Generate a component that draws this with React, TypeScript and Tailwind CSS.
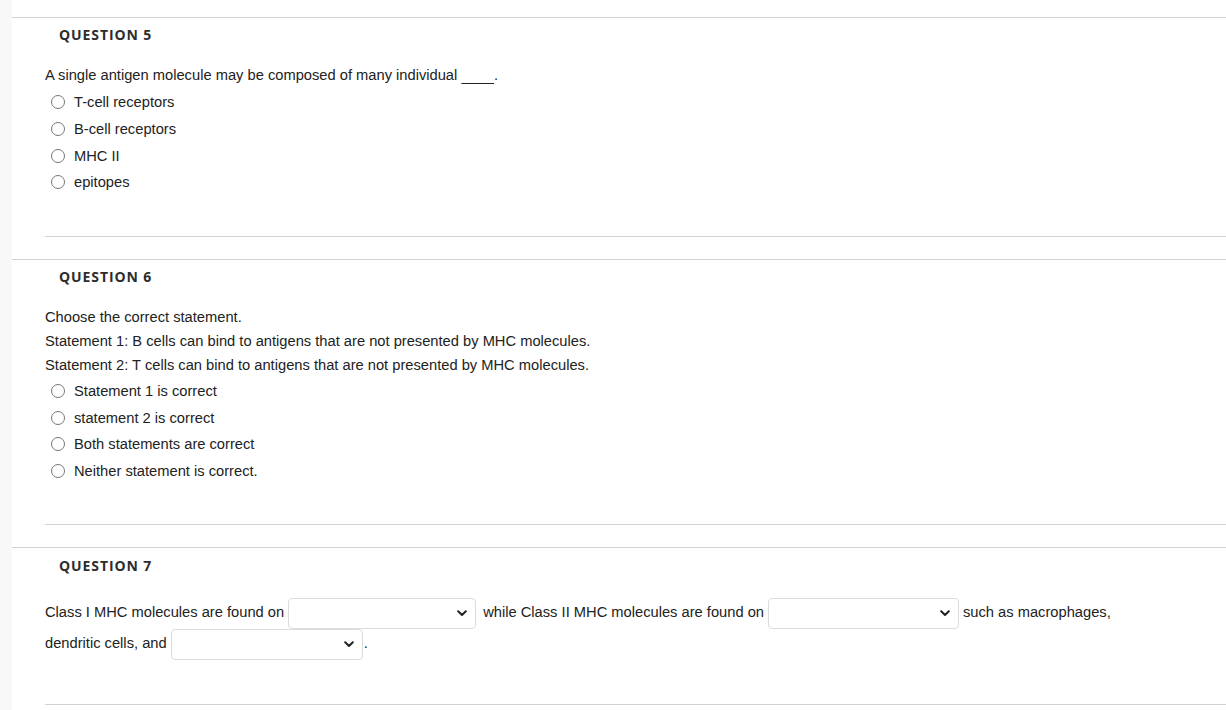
import React from "react";

const Radio = ({ label }: { label: string }) => (
  <div className="flex items-center h-[26.67px]">
    <span className="ml-[6px] w-[14px] h-[14px] rounded-full border border-[#767676] bg-white shrink-0" />
    <span className="ml-[9px]">{label}</span>
  </div>
);

const Select = ({ w }: { w: number }) => (
  <div
    className="h-[31px] border border-[#dcdcdc] rounded-[4px] bg-white flex items-center justify-end pr-[8px] shrink-0"
    style={{ width: w }}
  >
    <svg width="10" height="7" viewBox="0 0 10 7" fill="none">
      <path d="M1.2 1.3 L5 5 L8.8 1.3" stroke="#222" strokeWidth="2" strokeLinecap="round" strokeLinejoin="round" />
    </svg>
  </div>
);

const Header = ({ n, pt = 6 }: { n: number; pt?: number }) => (
  <div
    className="pl-[47px] h-[26px] leading-[20px] text-[14px] font-bold text-[#2d2d2d] tracking-[0.9px]"
    style={{ fontFamily: '"Open Sans", sans-serif', paddingTop: pt }}
  >
    QUESTION {n}
  </div>
);

export default function App() {
  return (
    <div
      className="flex min-h-[710px] bg-white text-[#222] text-[14.7px]"
      style={{ fontFamily: '"Liberation Sans", Arial, sans-serif' }}
    >
      <div className="w-[12px] bg-[#f8f8f8] shrink-0" />
      <div className="flex-1 pt-[17px]">
        {/* Question 5 */}
        <section className="border-t border-[#d2d2d2]">
          <Header n={5} pt={7} />
          <div className="ml-[33px] border-b border-[#d2d2d2] pb-[40px]">
            <div className="mt-[19px] leading-[24px]">
              A single antigen molecule may be composed of many individual <span className="underline decoration-[1px] underline-offset-[3px]">{"\u00a0\u00a0\u00a0\u00a0\u00a0\u00a0\u00a0\u00a0"}</span>.
            </div>
            <div className="mt-[2px]">
              <Radio label="T-cell receptors" />
              <Radio label="B-cell receptors" />
              <Radio label="MHC II" />
              <Radio label="epitopes" />
            </div>
          </div>
        </section>
        <div className="h-[22px]" />
        {/* Question 6 */}
        <section className="border-t border-[#d2d2d2]">
          <Header n={6} pt={7} />
          <div className="ml-[33px] border-b border-[#d2d2d2] pb-[40px]">
            <div className="mt-[19px] leading-[24px]">
              <div>Choose the correct statement.</div>
              <div>Statement 1: B cells can bind to antigens that are not presented by MHC molecules.</div>
              <div>Statement 2: T cells can bind to antigens that are not presented by MHC molecules.</div>
            </div>
            <div className="mt-[1px]">
              <Radio label="Statement 1 is correct" />
              <Radio label="statement 2 is correct" />
              <Radio label="Both statements are correct" />
              <Radio label="Neither statement is correct." />
            </div>
          </div>
        </section>
        <div className="h-[22px]" />
        {/* Question 7 */}
        <section className="border-t border-[#d2d2d2]">
          <Header n={7} pt={8} />
          <div className="ml-[33px] border-b border-[#d2d2d2] pb-[44px]">
            <div className="mt-[24px] flex items-center h-[31px]">
              <span className="pb-[4px]">Class I MHC molecules are found on</span>
              <span className="ml-[4px]"><Select w={188} /></span>
              <span className="ml-[7px] pb-[4px]">while Class II MHC molecules are found on</span>
              <span className="ml-[4px]"><Select w={191} /></span>
              <span className="ml-[4px] pb-[4px]">such as macrophages,</span>
            </div>
            <div className="flex items-center h-[31px]">
              <span className="pb-[4px]">dendritic cells, and</span>
              <span className="ml-[4px]"><Select w={192} /></span>
              <span className="ml-[1px] pb-[4px]">.</span>
            </div>
          </div>
        </section>
      </div>
    </div>
  );
}
